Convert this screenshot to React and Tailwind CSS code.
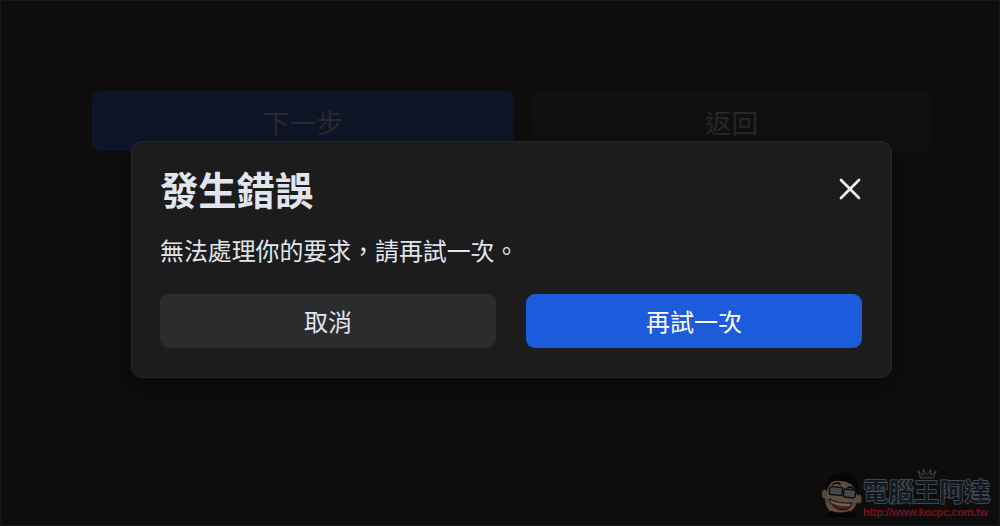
import React, { useState } from 'react';

// 關閉圖示
const CloseIcon = () => (
  <svg viewBox="0 0 24 24" className="w-6 h-6" fill="none" stroke="#f0f2fb" strokeWidth="2.7" strokeLinecap="round">
    <path d="M3 3 L21 21 M21 3 L3 21" />
  </svg>
);

// 吉祥物頭像
const Mascot = () => (
  <svg viewBox="0 0 42 46" className="w-[42px] h-[46px] shrink-0">
    <ellipse cx="3.500" cy="22" rx="2.500" ry="4.500" fill="#57493a" />
    <ellipse cx="38" cy="27" rx="2.500" ry="4.500" fill="#57493a" />
    <path d="M8 11 Q12 8 18 8 Q28 8 34 15 L36.500 25 Q36 35 31 38 L26 44 L8 44 L3 43 L9 39 Q4 34 4 27 Z" fill="#5b4e40" />
    <path d="M5 20 Q5 6 13 3 Q24 -1 32 2 Q39 7 36.500 24 Q35 16 30 12 Q22 8 13 9 Q8 11 5 20 Z" fill="#060606" />
    <path d="M12 12.500 Q15 9.500 19 12 M27 15.500 Q30 13.500 33 17" stroke="#0d0b0a" strokeWidth="1.700" fill="none" strokeLinecap="round" />
    <rect x="8.500" y="15" width="13" height="8" rx="2" transform="rotate(5 15 19)" fill="#46474d" stroke="#0e0e10" strokeWidth="1.500" />
    <rect x="22.500" y="17.500" width="12" height="8" rx="2" transform="rotate(7 28 21)" fill="#46474d" stroke="#0e0e10" strokeWidth="1.500" />
    <circle cx="6" cy="29" r="1.500" fill="#6a3328" />
    <circle cx="34" cy="32" r="1.500" fill="#6a3328" />
    <path d="M8 27 Q18 32 31 31 Q29 38 22 38 Q11 37 8 27 Z" fill="#55201b" stroke="#0f0b0a" strokeWidth="1" />
    <path d="M9 28 Q18 32.500 30 31.700 L29 34 Q18 35 10 30.500 Z" fill="#66666a" />
    <path d="M2 45 Q4 40 11 39 Q19 42 28 39 Q33 40 36 45 Z" fill="#060607" />
  </svg>
);

const Crown = () => (
  <svg viewBox="0 0 20 10" className="absolute left-[54px] -top-[9px] w-5 h-2.5" fill="#111820" stroke="#4b4d51" strokeWidth="0.8">
    <path d="M3.500 9 L1.500 3 L6 6 L6.500 1.500 L10 5.500 L13.500 1.500 L14 6 L18.500 3 L16.500 9 Z" />
    <circle cx="1.500" cy="2.500" r="0.800" />
    <circle cx="6.500" cy="1.300" r="0.800" />
    <circle cx="13.500" cy="1.300" r="0.800" />
    <circle cx="18.500" cy="2.500" r="0.800" />
  </svg>
);

const Watermark = () => (
  <div className="absolute right-[9px] bottom-[7px] flex items-end">
    <Mascot />
    <div className="relative w-[127px] h-[40px] whitespace-nowrap">
      <Crown />
      <div className="pt-px text-[25.4px] leading-[26px] font-bold text-[#101822] [-webkit-text-stroke:1.5px_#505358] [paint-order:stroke_fill]">
        電腦王阿達
      </div>
      <div className="text-[11px] leading-[14px] font-bold text-[#76101f] tracking-[-0.3px] font-['Liberation_Sans',sans-serif]">
        http://www.kocpc.com.tw
      </div>
    </div>
  </div>
);

const App = () => {
  const [open, setOpen] = useState(true);

  return (
    <div
      lang="zh-Hant"
      className="relative w-[1000px] h-[526px] overflow-hidden bg-[#0d0d0d] border border-[#1a191b] font-['Liberation_Sans','Noto_Sans_CJK_TC',sans-serif]"
    >
      {/* 底層頁面按鈕 */}
      <div className="flex gap-[18px] pt-[90px] pl-[91px] text-[26.7px]">
        <button className="w-[422px] h-[60px] pt-1.5 rounded-lg bg-[#0e1527] text-[#292a2d]">下一步</button>
        <button className="w-[399px] h-[60px] pt-1.5 rounded-lg bg-[#101010] text-[#272728]">返回</button>
      </div>

      <Watermark />

      {/* 錯誤對話框 */}
      {open && (
        <div className="absolute inset-0 pt-[140px] pl-[130px]">
          <div className="w-[761px] h-[237px] px-7 pt-7 rounded-[11px] bg-[#1c1c1c] border border-[#27282a] shadow-[0_10px_28px_rgba(0,0,0,0.3)] text-[#e2e5ee]">
            <div className="flex items-center justify-between h-11 pr-px">
              <h2 className="text-[38.3px] leading-[44px] font-bold">發生錯誤</h2>
              <button onClick={() => setOpen(false)} className="-mt-1.5">
                <CloseIcon />
              </button>
            </div>
            <p className="mt-5 text-[23.9px] leading-9">無法處理你的要求，請再試一次。</p>
            <div className="mt-6 pr-px grid grid-cols-2 gap-[30px] text-2xl">
              <button onClick={() => setOpen(false)} className="h-[54px] pt-[3px] rounded-[9px] bg-[#2b2c2e]">
                取消
              </button>
              <button className="h-[54px] pt-[3px] rounded-[9px] bg-[#1c5cdc] text-white">再試一次</button>
            </div>
          </div>
        </div>
      )}
    </div>
  );
};

export default App;
